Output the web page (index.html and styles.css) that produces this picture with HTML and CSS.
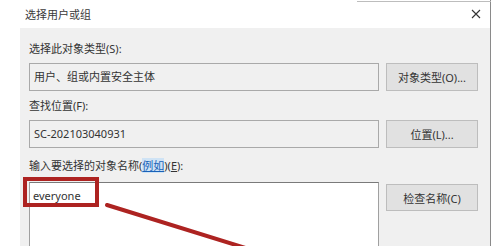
FILE: index.html
```html
<!DOCTYPE html>
<html lang="zh-CN">
<head>
<meta charset="utf-8">
<link rel="stylesheet" href="styles.css">
</head>
<body>
<div class="dialog">
  <div class="titlebar">
    <span class="title">选择用户或组</span>
    <svg class="close" width="10" height="10" viewBox="0 0 10 10"><path d="M1 1L9 9M9 1L1 9" stroke="#333" stroke-width="1.1" fill="none"/></svg>
  </div>
  <div class="content">
    <div class="section s1">
      <div class="label">选择此对象类型(S):</div>
      <div class="row">
        <div class="field">用户、组或内置安全主体</div>
        <div class="btn">对象类型(O)...</div>
      </div>
    </div>
    <div class="section s2">
      <div class="label">查找位置(F):</div>
      <div class="row">
        <div class="field">SC-202103040931</div>
        <div class="btn">位置(L)...</div>
      </div>
    </div>
    <div class="section s3">
      <div class="label">输入要选择的对象名称(<span class="link">例如</span>)(<u>E</u>):</div>
      <div class="row">
        <div class="field big">everyone</div>
        <div class="btn btn3">检查名称(C)</div>
      </div>
    </div>
  </div>
</div>
<div class="topline"></div>
<div class="highlight"></div>
<svg class="arrow" width="500" height="246" viewBox="0 0 500 246"><line x1="107" y1="205" x2="252" y2="250" stroke="#ad2321" stroke-width="4" stroke-linecap="round"/></svg>
</body>
</html>
```

FILE: styles.css
```css
html, body {
  margin: 0;
  padding: 0;
  width: 500px;
  height: 246px;
  overflow: hidden;
  background: #ffffff;
  font-family: "Noto Sans", "Noto Sans CJK SC", sans-serif;
  font-size: 11px;
  color: #333;
}
body {
  position: relative;
}
.dialog {
  width: 490px;
  height: 246px;
  border-right: 1px solid #8a8a8a;
  background: #ffffff;
  overflow: hidden;
}
.titlebar {
  height: 28px;
  display: flex;
  align-items: center;
  justify-content: space-between;
  padding: 0 9px 0 25px;
}
.title {
  color: #3a3a3a;
  font-size: 11px;
}
.close {
  display: block;
}
.content {
  margin-left: 20px;
  height: 218px;
  background: #f0f0f0;
  padding: 14px 0 0 9px;
  box-sizing: border-box;
  overflow: hidden;
}
.label {
  height: 14px;
  line-height: 14px;
  white-space: nowrap;
}
.row {
  display: flex;
  align-items: flex-start;
  gap: 7px;
  margin-top: 7px;
}
.field {
  width: 350px;
  height: 28px;
  box-sizing: border-box;
  border: 1px solid #a9a9a9;
  background: #f0f0f0;
  padding: 0 4px;
  line-height: 26px;
  white-space: nowrap;
}
.field.big {
  height: 72px;
  background: #ffffff;
  border-color: #a0a0a0;
  border-top-color: #7a7a7a;
  line-height: 22px;
  padding-top: 2px;
  padding-left: 3px;
}
.btn {
  width: 92px;
  height: 28px;
  box-sizing: border-box;
  border: 1px solid #bdbdbd;
  background: #e1e1e1;
  display: flex;
  align-items: center;
  justify-content: center;
  white-space: nowrap;
}
.btn3 {
  margin-top: 2px;
  height: 27px;
}
.s2 {
  margin-top: 8px;
}
.s3 {
  margin-top: 11px;
}
.s3 .row {
  margin-top: 9px;
}
.link {
  color: #1a62b8;
  background: #cfe3f5;
  text-decoration: underline;
}
.topline {
  position: absolute;
  left: 357px;
  top: 1px;
  width: 134px;
  height: 1px;
  background: #bdbdbd;
}
.highlight {
  position: absolute;
  left: 23px;
  top: 177px;
  width: 76px;
  height: 30px;
  box-sizing: border-box;
  border: 4px solid #ad2321;
}
.arrow {
  position: absolute;
  left: 0;
  top: 0;
}
```
